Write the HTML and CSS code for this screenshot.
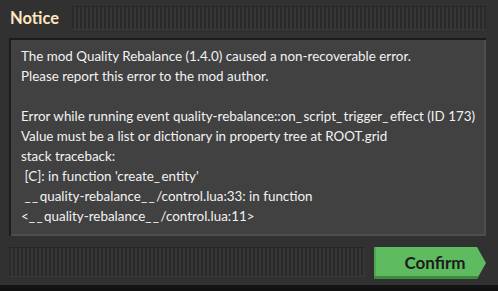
FILE: index.html
```html
<!DOCTYPE html>
<html lang="en">
<head>
    <meta charset="UTF-8">
    <meta name="viewport" content="width=device-width, initial-scale=1.0">
    <title>Notice</title>
    <link rel="stylesheet" href="styles.css">
</head>
<body>
    <div class="window">
        <header class="title-row">
            <h1 class="title">Notice</h1>
            <div class="drag-bar title-bar"></div>
        </header>
        <main class="panel">
            <p>The mod Quality Rebalance (1.4.0) caused a non-recoverable error.</p>
            <p>Please report this error to the mod author.</p>
            <p>&nbsp;</p>
            <p>Error while running event quality-rebalance::on<span class="us">_</span>script<span class="us">_</span>trigger<span class="us">_</span>effect (ID 173)</p>
            <p>Value must be a list or dictionary in property tree at ROOT.grid</p>
            <p>stack traceback:</p>
            <p>&nbsp;[C]: in function 'create<span class="us">_</span>entity'</p>
            <p>&nbsp;<span class="us">__</span>quality-rebalance<span class="us">__</span>/control.lua:33: in function</p>
            <p>&lt;<span class="us">__</span>quality-rebalance<span class="us">__</span>/control.lua:11&gt;</p>
        </main>
        <footer class="footer-row">
            <div class="drag-bar footer-bar"></div>
            <button class="confirm">Confirm</button>
        </footer>
    </div>
</body>
</html>
```

FILE: styles.css
```css
body {
    margin: 0;
    padding: 0;
    background-color: #111;
    font-family: Lato, "Noto Sans", sans-serif;
}

.window {
    width: 498px;
    height: 288px;
    box-sizing: border-box;
    padding: 6px 12px 0 9px;
    background-color: #313131;
    border-bottom: 3px solid #141414;
    display: flex;
    flex-direction: column;
}

.title-row {
    display: flex;
    align-items: center;
    height: 24px;
    gap: 13px;
}

    .title-row .title {
        margin: 0 0 0 1px;
        font-size: 16.5px;
        font-weight: bold;
        color: #ffe6c0;
        line-height: 24px;
    }

.drag-bar {
    flex: 1;
    align-self: stretch;
    background-color: #2a2a2a;
    background-image: repeating-linear-gradient(to right, #2a2a2a 0, #2a2a2a 2px, #373737 2px, #373737 4px);
    box-shadow: inset 0 1px 0 #262626, inset 0 -1px 0 #3a3a3a;
}

.panel {
    margin-top: 8px;
    height: 198px;
    box-sizing: border-box;
    padding: 8px 12px 0 12px;
    background-color: #414141;
    box-shadow: inset 2px 2px 0 #1c1c1c, inset -2px -2px 0 #4d4d4d;
    color: #f2f2f2;
    font-size: 13.4px;
    line-height: 20px;
}

    .panel p {
        margin: 0;
        white-space: pre;
    }

    .panel .us {
        letter-spacing: 1.5px;
    }

.footer-row {
    display: flex;
    margin-top: 11px;
    height: 32px;
    gap: 9px;
}

.footer-bar {
    margin: 0 0 2px 0;
}

.confirm {
    width: 112px;
    height: 32px;
    padding: 0 0 2px 10px;
    border: none;
    background-color: #5ebb60;
    box-shadow: inset 0 -3px 0 #3d8a40, inset 2px 0 0 #4fa852;
    clip-path: polygon(0 0, 92% 0, 100% 50%, 92% 100%, 0 100%);
    font-family: Lato, "Noto Sans", sans-serif;
    font-size: 17px;
    font-weight: bold;
    color: #1c1c1c;
}
```
